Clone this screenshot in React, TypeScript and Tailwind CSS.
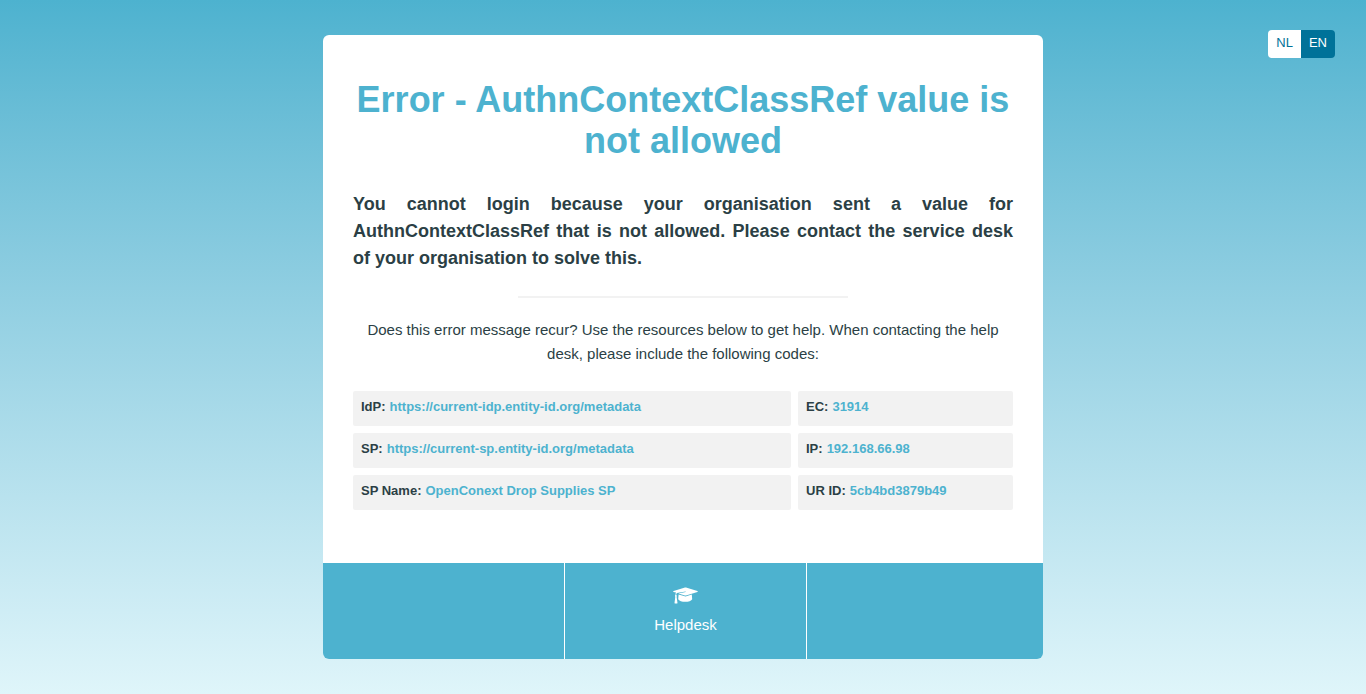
const codes = [
  { label: "IdP", value: "https://current-idp.entity-id.org/metadata" },
  { label: "EC", value: "31914" },
  { label: "SP", value: "https://current-sp.entity-id.org/metadata" },
  { label: "IP", value: "192.168.66.98" },
  { label: "SP Name", value: "OpenConext Drop Supplies SP" },
  { label: "UR ID", value: "5cb4bd3879b49" },
];

function GraduationCap() {
  return (
    <svg viewBox="0 0 25 17" className="h-[17px] w-[25px]" fill="currentColor" aria-hidden="true">
      <path d="M12 .6a2 2 0 0 1 1 0L24.4 4c.5.2.5.7 0 .9L13 8.4a2 2 0 0 1-1 0L5.4 6.4l7.3-1.3-.1-.5-8.7 1.3c-.5.5-.7 1.2-.7 2.1.7.4.9 1.1.4 1.7l.9 6.2c0 .3-.1.5-.4.5H1.9c-.3 0-.4-.2-.4-.5l.8-6.2c-.5-.6-.4-1.3.2-1.7 0-1 .1-1.7.5-2.4L.6 4.9c-.6-.2-.6-.7 0-.9Z" />
      <path d="m5.6 7.4 6.1 1.9a3 3 0 0 0 1.6 0l5.5-1.7.4 4.7c-1.4 3.4-12.5 3.4-14 0Z" />
    </svg>
  );
}

export default function App() {
  return (
    <div className="relative min-h-screen bg-linear-to-b from-[#4db2cf] to-[#dff5fa] py-[35px] font-['Liberation_Sans',Arial,sans-serif] text-[#2b3f45]">
      <nav aria-label="Language" className="absolute top-[30px] right-[31px] flex overflow-hidden rounded text-[13px] leading-[26px]">
        <a href="#nl" className="h-7 bg-white px-2 text-[#007299]">NL</a>
        <a href="#en" className="h-7 bg-[#007299] px-2 text-white">EN</a>
      </nav>
      <main className="mx-auto max-w-[720px] overflow-hidden rounded-md bg-white">
        <div className="px-[30px] pt-11 pb-[53px]">
          <h1 className="text-center text-4xl leading-[41px] font-bold text-[#4db2cf]">
            Error - AuthnContextClassRef value is not allowed
          </h1>
          <p className="mt-[30px] text-justify text-lg leading-[27px] font-bold">
            You cannot login because your organisation sent a value for AuthnContextClassRef that is not allowed. Please contact the service desk of your organisation to solve this.
          </p>
          <hr className="mx-auto mt-6 w-1/2 border-t-2 border-[#f2f2f2]" />
          <p className="mt-5 text-center text-[15px] leading-6">
            Does this error message recur? Use the resources below to get help. When contacting the help desk, please include the following codes:
          </p>
          <dl className="mt-[25px] grid grid-cols-[438fr_215fr] gap-[7px] text-[13px] font-bold">
            {codes.map((code) => (
              <div key={code.label} className="flex h-[35px] gap-1 rounded-xs bg-[#f2f2f2] px-2 leading-8">
                <dt>{code.label}:</dt>
                <dd className="text-[#4db2cf]">{code.value}</dd>
              </div>
            ))}
          </dl>
        </div>
        <footer className="grid h-24 grid-cols-[241fr_243fr_236fr] bg-[#4db2cf] text-white">
          <div />
          <a href="#helpdesk" className="flex flex-col items-center gap-[9px] border-x border-white pt-6 text-[15px] leading-6">
            <GraduationCap />
            <span>Helpdesk</span>
          </a>
          <div />
        </footer>
      </main>
    </div>
  );
}
